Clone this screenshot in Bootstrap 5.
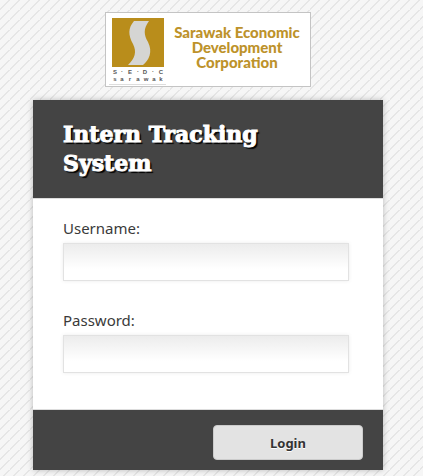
<!DOCTYPE html>
<html lang="en">
<head>
<meta charset="utf-8">
<meta name="viewport" content="width=device-width, initial-scale=1">
<title>Intern Tracking System</title>
<link href="https://cdn.jsdelivr.net/npm/bootstrap@5.3.0/dist/css/bootstrap.min.css" rel="stylesheet">
<style>
body {
  font-family: "Noto Sans", sans-serif;
  font-size: 15px;
  color: #3a3a3a;
  background: #f6f6f6 linear-gradient(135deg, transparent 45%, #e6e6e6 45%, #e6e6e6 55%, transparent 55%) 0 0 / 10px 10px;
  padding: 12px 7px 6px 0;
}
.brand { border: 1px solid #c4c4c4; width: 206px; height: 75px; margin-bottom: 13px; }
.brand svg { display: block; width: 100%; height: 100%; }
.login { max-width: 350px; box-shadow: 0 0 6px rgba(0, 0, 0, .25); }
.login-head, .login-foot { background: #444; }
.login-head { padding: 20px 30px; height: 98px; }
.login-head h1 {
  font: 700 22px/29px "DejaVu Serif", serif;
  color: #fff;
  -webkit-text-stroke: 1px #fff;
  text-shadow: 2px 2px 1px #000;
}
.login-body { padding: 18px 34px 36px 30px; border-top: 1px solid #ddd; border-bottom: 1px solid #ddd; }
.login-body label { line-height: 22px; margin-bottom: 4px; }
.login-body .form-control {
  height: 38px;
  border-color: #e2e2e2;
  background: linear-gradient(#ececec, #fff 70%);
  box-shadow: 0 0 4px rgba(0, 0, 0, .08);
}
.field + .field { margin-top: 28px; }
.login-foot { padding: 15px 20px 10px; }
.login-foot .btn {
  width: 150px;
  height: 35px;
  font-size: 13px;
  line-height: 20px;
  color: #333;
  background: #e3e3e3;
  border-color: #ccc;
  text-shadow: 0 1px 0 #fff;
}
</style>
</head>
<body>
<header class="brand bg-white mx-auto">
  <svg viewBox="0 0 204 73" role="img" aria-label="Sarawak Economic Development Corporation">
    <rect x="6" y="5" width="52" height="49" fill="#b98d1b"/>
    <path d="M28 8h15c-6 8-5 14-1 21 5 10 1 18-5 23H22c7-7 9-13 5-21-5-9-5-16 1-23z" fill="#d5d5d3"/>
    <g fill="#555" font-family="Liberation Sans, sans-serif" font-weight="700" text-anchor="middle">
      <g font-size="6"><text x="9" y="61">S</text><text x="16" y="60">·</text><text x="24" y="61">E</text><text x="32" y="60">·</text><text x="39" y="61">D</text><text x="47" y="60">·</text><text x="55" y="61">C</text></g>
      <g font-size="6"><text x="9" y="68">s</text><text x="16" y="68">a</text><text x="24" y="68">r</text><text x="32" y="68">a</text><text x="40" y="68">w</text><text x="48" y="68">a</text><text x="55" y="68">k</text></g>
    </g>
    <path d="M3 71.500h57" stroke="#ddd"/>
    <g fill="#bd922a" font-family="Lato, sans-serif" font-weight="900" font-size="15" text-anchor="middle">
      <text x="131" y="25">Sarawak Economic</text>
      <text x="131" y="40">Development</text>
      <text x="131" y="55">Corporation</text>
    </g>
  </svg>
</header>
<main class="login bg-white mx-auto">
  <form>
    <div class="login-head"><h1 class="m-0">Intern Tracking System</h1></div>
    <div class="login-body">
      <div class="field">
        <label class="d-block" for="username">Username:</label>
        <input class="form-control rounded-0" type="text" id="username">
      </div>
      <div class="field">
        <label class="d-block" for="password">Password:</label>
        <input class="form-control rounded-0" type="password" id="password">
      </div>
    </div>
    <div class="login-foot d-flex justify-content-end">
      <button class="btn fw-bold rounded-1" type="submit">Login</button>
    </div>
  </form>
</main>
<script src="https://cdn.jsdelivr.net/npm/bootstrap@5.3.0/dist/js/bootstrap.bundle.min.js"></script>
</body>
</html>
